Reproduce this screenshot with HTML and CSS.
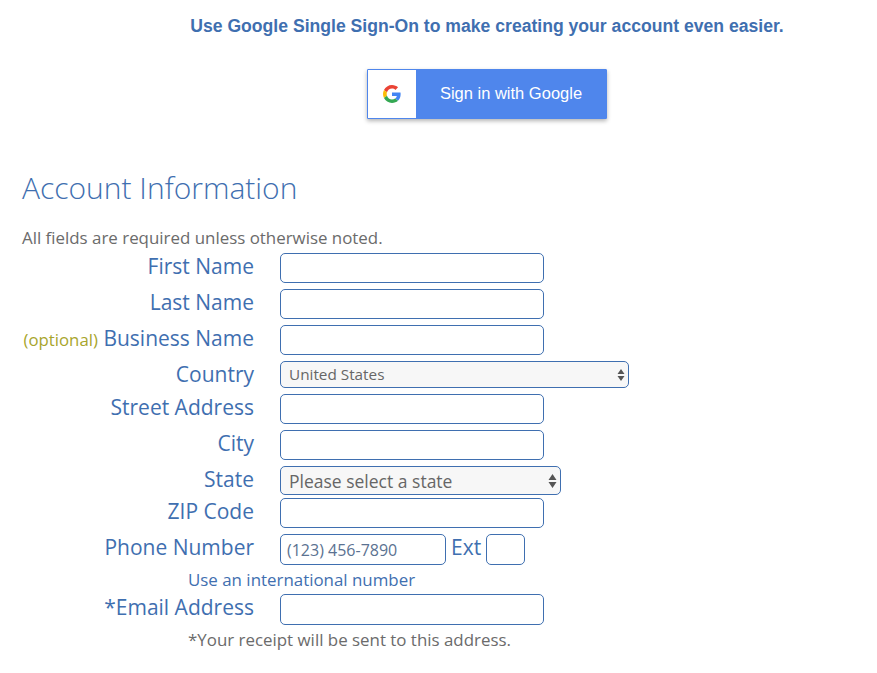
FILE: index.html
```html
<!DOCTYPE html>
<html lang="en">
<head>
  <meta charset="UTF-8">
  <meta name="viewport" content="width=device-width, initial-scale=1.0">
  <title>Account Information</title>
  <link rel="stylesheet" href="styles.css">
</head>
<body>
  <div class="sso">
    <p class="sso-text">Use Google Single Sign-On to make creating your account even easier.</p>
    <a class="google-btn" href="#">
      <span class="google-icon">
        <svg width="18" height="18" viewBox="0 0 48 48">
          <path fill="#EA4335" d="M24 9.500c3.500 0 6.700 1.200 9.200 3.600l6.900-6.900C35.900 2.400 30.500 0 24 0 14.600 0 6.500 5.400 2.600 13.200l8 6.200C12.500 13.700 17.800 9.500 24 9.500z"/>
          <path fill="#4285F4" d="M47 24.500c0-1.600-.1-3.100-.4-4.500H24v9h12.900c-.6 3-2.200 5.500-4.700 7.200l7.700 6c4.500-4.200 7.100-10.300 7.100-17.700z"/>
          <path fill="#FBBC05" d="M10.600 28.600c-.5-1.400-.8-3-.8-4.600s.3-3.200.8-4.600l-8-6.200C.9 16.500 0 20.100 0 24s.9 7.500 2.600 10.800l8-6.200z"/>
          <path fill="#34A853" d="M24 48c6.500 0 11.900-2.100 15.900-5.800l-7.700-6c-2.200 1.400-4.900 2.300-8.200 2.300-6.200 0-11.500-4.200-13.400-9.900l-8 6.200C6.500 42.600 14.600 48 24 48z"/>
        </svg>
      </span>
      <span class="google-label">Sign in with Google</span>
    </a>
  </div>

  <h2 class="section-title">Account Information</h2>
  <p class="note">All fields are required unless otherwise noted.</p>

  <form class="account-form">
    <div class="row">
      <label class="field-label">First Name</label>
      <input class="field" type="text">
    </div>
    <div class="row">
      <label class="field-label">Last Name</label>
      <input class="field" type="text">
    </div>
    <div class="row">
      <label class="field-label"><span class="optional">(optional)</span> Business Name</label>
      <input class="field" type="text">
    </div>
    <div class="row">
      <label class="field-label">Country</label>
      <div class="select-wrap select-country">
        <select class="select select-small"><option>United States</option></select>
        <svg class="select-arrows" width="8" height="14" viewBox="0 0 8 14"><path d="M4 1l3.500 5h-7zM4 13L.5 8h7z"/></svg>
      </div>
    </div>
    <div class="row">
      <label class="field-label">Street Address</label>
      <input class="field" type="text">
    </div>
    <div class="row">
      <label class="field-label">City</label>
      <input class="field" type="text">
    </div>
    <div class="row row-state">
      <label class="field-label">State</label>
      <div class="select-wrap select-state">
        <select class="select"><option>Please select a state</option></select>
        <svg class="select-arrows" width="9" height="16" viewBox="0 0 9 16"><path d="M4.500 1l4 6h-8zM4.500 15l-4-6h8z"/></svg>
      </div>
    </div>
    <div class="row">
      <label class="field-label">ZIP Code</label>
      <input class="field" type="text">
    </div>
    <div class="row">
      <label class="field-label">Phone Number</label>
      <input class="field field-phone" type="text" placeholder="(123) 456-7890">
      <span class="ext-label">Ext</span>
      <input class="field field-ext" type="text">
    </div>
    <p class="hint hint-blue">Use an international number</p>
    <div class="row">
      <label class="field-label">*Email Address</label>
      <input class="field field-email" type="text">
    </div>
    <p class="hint hint-grey">*Your receipt will be sent to this address.</p>
  </form>
</body>
</html>
```

FILE: styles.css
```css
body {
  margin: 0;
  padding: 0 0 24px 22px;
  background-color: #fff;
  font-family: "Open Sans", sans-serif;
  color: #666;
}
.sso {
  display: flex;
  flex-direction: column;
  align-items: center;
  margin-left: -22px;
  padding-left: 97px;
}
.sso-text {
  margin: 16px 0 0;
  height: 21px;
  line-height: 21px;
  font-family: "Liberation Sans", Arial, sans-serif;
  font-size: 17.6px;
  font-weight: bold;
  color: #3f6fb0;
}
.google-btn {
  display: flex;
  width: 240px;
  height: 50px;
  margin-top: 32px;
  box-sizing: border-box;
  border: 1px solid #4f86ec;
  background-color: #4f86ec;
  box-shadow: 0 2px 4px rgba(0, 0, 0, 0.3);
  text-decoration: none;
  border-radius: 1px;
}
.google-icon {
  display: flex;
  align-items: center;
  justify-content: center;
  width: 48px;
  background-color: #fff;
}
.google-label {
  flex: 1;
  text-align: center;
  line-height: 47px;
  font-family: "Liberation Sans", Arial, sans-serif;
  font-size: 16.5px;
  color: #fff;
}
.section-title {
  margin: 49px 0 0;
  height: 40px;
  line-height: 40px;
  font-size: 30px;
  font-weight: 300;
  color: #3f6fb0;
}
.note {
  margin: 19px 0 0;
  height: 22px;
  line-height: 22px;
  font-size: 16.9px;
  color: #6b6b6b;
}
.account-form {
  margin-top: 4px;
}
.row {
  display: flex;
  align-items: flex-start;
  margin-bottom: 6px;
}
.row-state {
  margin-bottom: 3px;
}
.field-label {
  width: 232px;
  margin-right: 26px;
  flex-shrink: 0;
  text-align: right;
  white-space: nowrap;
  line-height: 26px;
  font-size: 21px;
  color: #3f6fb0;
}
.optional {
  font-size: 16.8px;
  color: #a8a52c;
}
.field {
  box-sizing: border-box;
  width: 264px;
  height: 30px;
  padding: 0 6px;
  border: 1px solid #3f6fb0;
  border-radius: 5px;
  background-color: #fff;
  font-family: "Open Sans", sans-serif;
  font-size: 16px;
  outline: none;
}
.field-phone {
  width: 166px;
  height: 31px;
}
.field-phone::placeholder {
  color: #5b7291;
  opacity: 1;
}
.field-ext {
  width: 39px;
  height: 31px;
}
.field-email {
  height: 31px;
}
.ext-label {
  margin: 0 5px 0 5px;
  line-height: 26px;
  font-size: 21px;
  color: #3f6fb0;
}
.select-wrap {
  position: relative;
}
.select-country {
  width: 349px;
  height: 27px;
}
.select-state {
  width: 281px;
  height: 29px;
}
.select {
  appearance: none;
  display: block;
  box-sizing: border-box;
  width: 100%;
  height: 100%;
  padding: 0 8px;
  border: 1px solid #3f6fb0;
  border-radius: 5px;
  background-color: #f7f7f7;
  font-family: "Open Sans", sans-serif;
  font-size: 17.5px;
  color: #666;
}
.select-small {
  padding-bottom: 2px;
  font-size: 15.3px;
}
.select-arrows {
  position: absolute;
  top: 50%;
  right: 4px;
  transform: translateY(-50%);
  fill: #555;
}
.hint {
  margin: 0;
  padding-left: 166px;
  height: 24px;
  line-height: 24px;
  font-size: 16.9px;
}
.hint-blue {
  margin: -3px 0 2px;
  color: #3f6fb0;
}
.hint-grey {
  margin-top: -3px;
  color: #6b6b6b;
}
```
